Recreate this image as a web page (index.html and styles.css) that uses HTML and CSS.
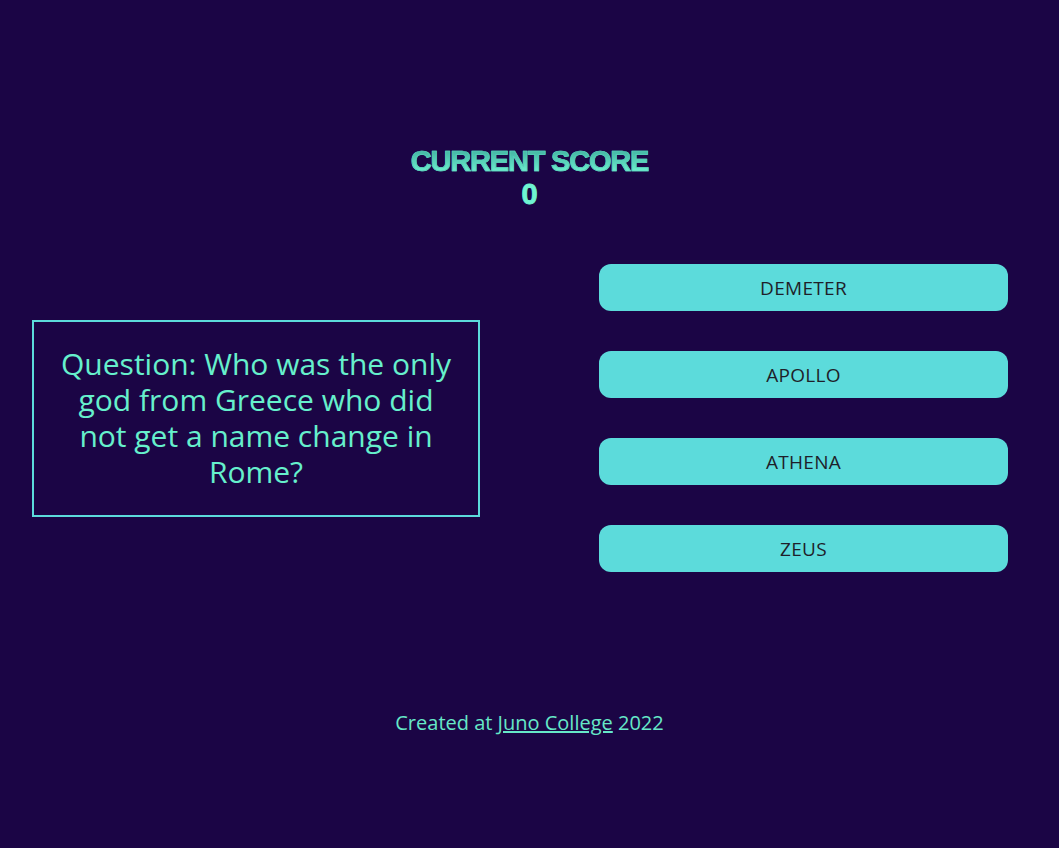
FILE: index.html
```html
<!DOCTYPE html>
<html lang="en">
<head>
<meta charset="utf-8">
<title>Greek Gods Trivia</title>
<link rel="stylesheet" href="styles.css">
</head>
<body>
<div class="page">
  <header class="score">
    <h2 class="score-title">CURRENT SCORE</h2>
    <p class="score-value">0</p>
  </header>
  <main class="game">
    <div class="question-box">
      <p class="question">Question: Who was the only god from Greece who did not get a name change in Rome?</p>
    </div>
    <div class="answers">
      <button class="answer">DEMETER</button>
      <button class="answer">APOLLO</button>
      <button class="answer">ATHENA</button>
      <button class="answer">ZEUS</button>
    </div>
  </main>
  <footer class="footer">
    <p>Created at <a href="#" class="footer-link">Juno College</a> 2022</p>
  </footer>
</div>
</body>
</html>
```
FILE: styles.css
```css
* { box-sizing: border-box; }
html, body {
  margin: 0;
  padding: 0;
  background: #1b0545;
}
body {
  font-family: "Open Sans", "Noto Sans", sans-serif;
  color: #66f0cc;
}
.page {
  height: 848px;
  display: flex;
  flex-direction: column;
}
.score {
  padding-top: 145px;
  text-align: center;
  font-family: "Liberation Sans", Arial, sans-serif;
}
.score-title {
  margin: 0;
  font-size: 29px;
  line-height: 33px;
  font-weight: 700;
  letter-spacing: -1.2px;
  background: linear-gradient(to bottom, #48bca8 25%, #70f2d2 85%);
  -webkit-background-clip: text;
  background-clip: text;
  color: transparent;
  -webkit-text-stroke: 0.7px #58d2bb;
}
.score-value {
  margin: 0;
  font-size: 29px;
  line-height: 33px;
  font-weight: 700;
  color: #6ff5d2;
  -webkit-text-stroke: 0.9px #6ff5d2;
}
.game {
  margin-top: 53px;
  display: flex;
  justify-content: space-between;
  align-items: center;
  padding: 0 51px 0 32px;
}
.question-box {
  width: 448px;
  height: 197px;
  border: 2px solid #5cdbdb;
  display: flex;
  align-items: center;
  justify-content: center;
  padding: 0 26px;
}
.question {
  margin: 0;
  text-align: center;
  font-size: 30px;
  line-height: 36px;
  color: #66f0cc;
}
.answers {
  width: 409px;
  display: flex;
  flex-direction: column;
  gap: 40px;
}
.answer {
  height: 47px;
  border: none;
  border-radius: 12px;
  background: #5cdbdb;
  color: #1f1f2a;
  font-family: "Open Sans", "Noto Sans", sans-serif;
  font-size: 19px;
  font-weight: 500;
  letter-spacing: 0.3px;
}
.footer {
  margin-top: 137px;
  text-align: center;
}
.footer p {
  margin: 0;
  font-size: 20px;
  color: #66e8c8;
}
.footer-link {
  color: #66e8c8;
}
```
